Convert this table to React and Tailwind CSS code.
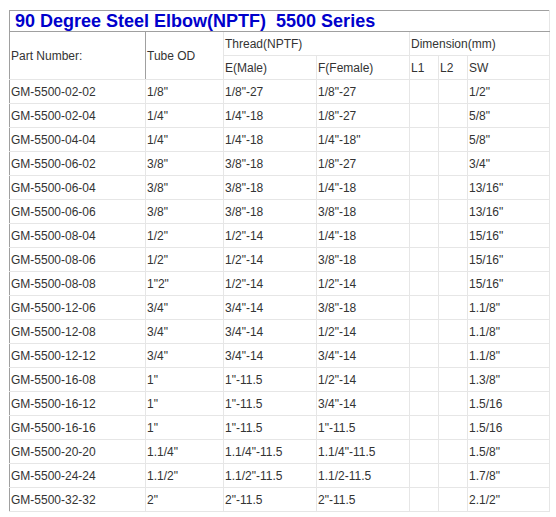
import React from "react";

const rows = [
  ["GM-5500-02-02", '1/8"', '1/8"-27', '1/8"-27', '1/2"'],
  ["GM-5500-02-04", '1/4"', '1/4"-18', '1/8"-27', '5/8"'],
  ["GM-5500-04-04", '1/4"', '1/4"-18', '1/4"-18"', '5/8"'],
  ["GM-5500-06-02", '3/8"', '3/8"-18', '1/8"-27', '3/4"'],
  ["GM-5500-06-04", '3/8"', '3/8"-18', '1/4"-18', '13/16"'],
  ["GM-5500-06-06", '3/8"', '3/8"-18', '3/8"-18', '13/16"'],
  ["GM-5500-08-04", '1/2"', '1/2"-14', '1/4"-18', '15/16"'],
  ["GM-5500-08-06", '1/2"', '1/2"-14', '3/8"-18', '15/16"'],
  ["GM-5500-08-08", '1"2"', '1/2"-14', '1/2"-14', '15/16"'],
  ["GM-5500-12-06", '3/4"', '3/4"-14', '3/8"-18', '1.1/8"'],
  ["GM-5500-12-08", '3/4"', '3/4"-14', '1/2"-14', '1.1/8"'],
  ["GM-5500-12-12", '3/4"', '3/4"-14', '3/4"-14', '1.1/8"'],
  ["GM-5500-16-08", '1"', '1"-11.5', '1/2"-14', '1.3/8"'],
  ["GM-5500-16-12", '1"', '1"-11.5', '3/4"-14', "1.5/16"],
  ["GM-5500-16-16", '1"', '1"-11.5', '1"-11.5', "1.5/16"],
  ["GM-5500-20-20", '1.1/4"', '1.1/4"-11.5', '1.1/4"-11.5', '1.5/8"'],
  ["GM-5500-24-24", '1.1/2"', '1.1/2"-11.5', "1.1/2-11.5", '1.7/8"'],
  ["GM-5500-32-32", '2"', '2"-11.5', '2"-11.5', '2.1/2"'],
];

const cell = "border border-[#e6e6e6] px-px text-left align-middle font-normal";

export default function App() {
  return (
    <div className="min-h-[517px] bg-white pl-[9px] pt-[10px] font-['Liberation_Sans',Arial,sans-serif] text-[12px] text-[#333]">
      <table className="w-[540px] table-fixed border-collapse border-t border-l border-t-[#a0a0a0] border-l-[#a0a0a0]">
        <colgroup>
          <col className="w-[136px]" />
          <col className="w-[78px]" />
          <col className="w-[93px]" />
          <col className="w-[93px]" />
          <col className="w-[29px]" />
          <col className="w-[29px]" />
          <col className="w-[82px]" />
        </colgroup>
        <thead>
          <tr className="h-[21px]">
            <th
              colSpan={7}
              className="border border-[#e6e6e6] border-t-[#a0a0a0] border-l-[#a0a0a0] border-b-[#a0a0a0] pl-[5px] text-left align-middle text-[18px] font-bold leading-none text-[#0000cc] whitespace-pre"
            >
              {"90 Degree Steel Elbow(NPTF)  5500 Series"}
            </th>
          </tr>
          <tr className="h-6">
            <th rowSpan={2} className={`${cell} border-r-[#a0a0a0] border-l-[#a0a0a0]`}>
              Part Number:
            </th>
            <th rowSpan={2} className={cell}>
              Tube OD
            </th>
            <th colSpan={2} className={cell}>
              Thread(NPTF)
            </th>
            <th colSpan={3} className={cell}>
              Dimension(mm)
            </th>
          </tr>
          <tr className="h-6">
            <th className={cell}>E(Male)</th>
            <th className={cell}>F(Female)</th>
            <th className={cell}>L1</th>
            <th className={cell}>L2</th>
            <th className={cell}>SW</th>
          </tr>
        </thead>
        <tbody>
          {rows.map((r) => (
            <tr key={r[0]} className="h-6">
              <td className={`${cell} border-l-[#a0a0a0]`}>{r[0]}</td>
              <td className={cell}>{r[1]}</td>
              <td className={cell}>{r[2]}</td>
              <td className={cell}>{r[3]}</td>
              <td className={cell}></td>
              <td className={cell}></td>
              <td className={cell}>{r[4]}</td>
            </tr>
          ))}
        </tbody>
      </table>
    </div>
  );
}
